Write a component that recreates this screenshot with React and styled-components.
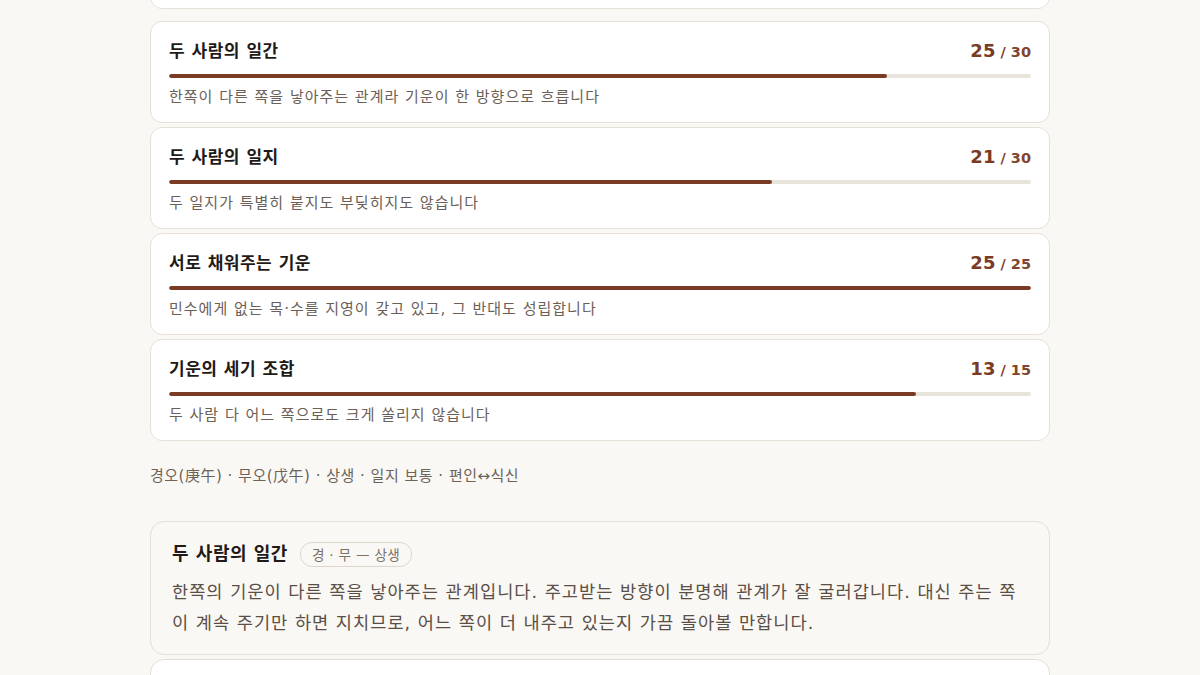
import React from "react";
import styled, { createGlobalStyle } from "styled-components";

const Global = createGlobalStyle`
  html, body { margin: 0; padding: 0; background: #faf8f4; }
  body {
    font-family: "DejaVu Sans", "Noto Sans CJK JP", "Noto Sans CJK KR", sans-serif;
    color: #2a2420;
    overflow: hidden;
  }
`;

const Column = styled.div`
  width: 900px;
  margin: -71px auto 0;
  display: flex;
  flex-direction: column;
`;

const PrevCard = styled.div`
  height: 78px;
  background: #fff;
  border: 1px solid #e6e0d7;
  border-radius: 12px;
  margin-bottom: 12px;
`;

const ScoreList = styled.div`
  display: flex;
  flex-direction: column;
  gap: 4px;
`;

const ScoreCard = styled.div`
  background: #fff;
  border: 1px solid #e6e0d7;
  border-radius: 12px;
  padding: 17px 18px 15px;
`;

const ScoreHead = styled.div`
  display: flex;
  justify-content: space-between;
  align-items: center;
  height: 24px;
`;

const ScoreTitle = styled.div`
  font-size: 17px;
  line-height: 24px;
  font-weight: 700;
  letter-spacing: 0.5px;
  color: #1f1a17;
`;

const Score = styled.div`
  color: #7a3b24;
  font-weight: 700;
  font-size: 18px;
  line-height: 24px;
  white-space: pre;
`;

const ScoreMax = styled.span`
  font-size: 14.5px;
  font-weight: 700;
  color: #82452e;
`;

const Track = styled.div`
  margin-top: 11px;
  height: 4px;
  border-radius: 2px;
  background: #e8e3db;
  overflow: hidden;
`;

const Fill = styled.div`
  height: 100%;
  background: #7a3b24;
  border-radius: 2px;
`;

const Desc = styled.div`
  margin-top: 9px;
  font-size: 15px;
  line-height: 20px;
  letter-spacing: 1px;
  color: #6b6057;
`;

const Summary = styled.div`
  margin-top: 25px;
  font-size: 15px;
  line-height: 20px;
  letter-spacing: 0.5px;
  color: #6b6258;
`;

const DetailList = styled.div`
  margin-top: 35px;
  display: flex;
  flex-direction: column;
  gap: 4px;
`;

const DetailCard = styled.div`
  background: ${(p) => (p.$plain ? "#fff" : "#faf8f4")};
  border: 1px solid #e4ded4;
  border-radius: 14px;
  padding: 19px 21px 15px;
  min-height: ${(p) => p.$minH || 0}px;
`;

const DetailHead = styled.div`
  display: flex;
  align-items: center;
  gap: 12px;
  height: 26px;
`;

const DetailTitle = styled.div`
  font-size: 18px;
  line-height: 26px;
  font-weight: 700;
  letter-spacing: 0.5px;
  color: #1f1a17;
`;

const Pill = styled.span`
  display: inline-flex;
  align-items: center;
  height: 23px;
  padding: 0 11px;
  border: 1px solid #ddd6cb;
  border-radius: 12px;
  font-size: 13.6px;
  letter-spacing: 0.3px;
  color: #7a7068;
  background: #faf8f4;
`;

const Para = styled.p`
  margin: 10px 0 0;
  font-size: 17.6px;
  line-height: 31px;
  letter-spacing: 1px;
  color: #5a4f47;
`;

const scores = [
  { title: "두 사람의 일간", score: 25, max: 30, desc: "한쪽이 다른 쪽을 낳아주는 관계라 기운이 한 방향으로 흐릅니다" },
  { title: "두 사람의 일지", score: 21, max: 30, desc: "두 일지가 특별히 붙지도 부딪히지도 않습니다" },
  { title: "서로 채워주는 기운", score: 25, max: 25, desc: "민수에게 없는 목·수를 지영이 갖고 있고, 그 반대도 성립합니다" },
  { title: "기운의 세기 조합", score: 13, max: 15, desc: "두 사람 다 어느 쪽으로도 크게 쏠리지 않습니다" },
];

export default function App() {
  return (
    <>
      <Global />
      <Column>
        <PrevCard />
        <ScoreList>
          {scores.map((s) => (
            <ScoreCard key={s.title}>
              <ScoreHead>
                <ScoreTitle>{s.title}</ScoreTitle>
                <Score>
                  {s.score}
                  <ScoreMax>{` / ${s.max}`}</ScoreMax>
                </Score>
              </ScoreHead>
              <Track>
                <Fill style={{ width: `${(s.score / s.max) * 100}%` }} />
              </Track>
              <Desc>{s.desc}</Desc>
            </ScoreCard>
          ))}
        </ScoreList>
        <Summary>경오(庚午) · 무오(戊午) · 상생 · 일지 보통 · 편인↔식신</Summary>
        <DetailList>
          <DetailCard>
            <DetailHead>
              <DetailTitle>두 사람의 일간</DetailTitle>
              <Pill>경 · 무 — 상생</Pill>
            </DetailHead>
            <Para>
              한쪽의 기운이 다른 쪽을 낳아주는 관계입니다. 주고받는 방향이 분명해 관계가 잘 굴러갑니다. 대신 주는 쪽이 계속 주기만 하면 지치므로, 어느 쪽이 더 내주고 있는지 가끔 돌아볼 만합니다.
            </Para>
          </DetailCard>
          <DetailCard $plain $minH={120} />
        </DetailList>
      </Column>
    </>
  );
}
